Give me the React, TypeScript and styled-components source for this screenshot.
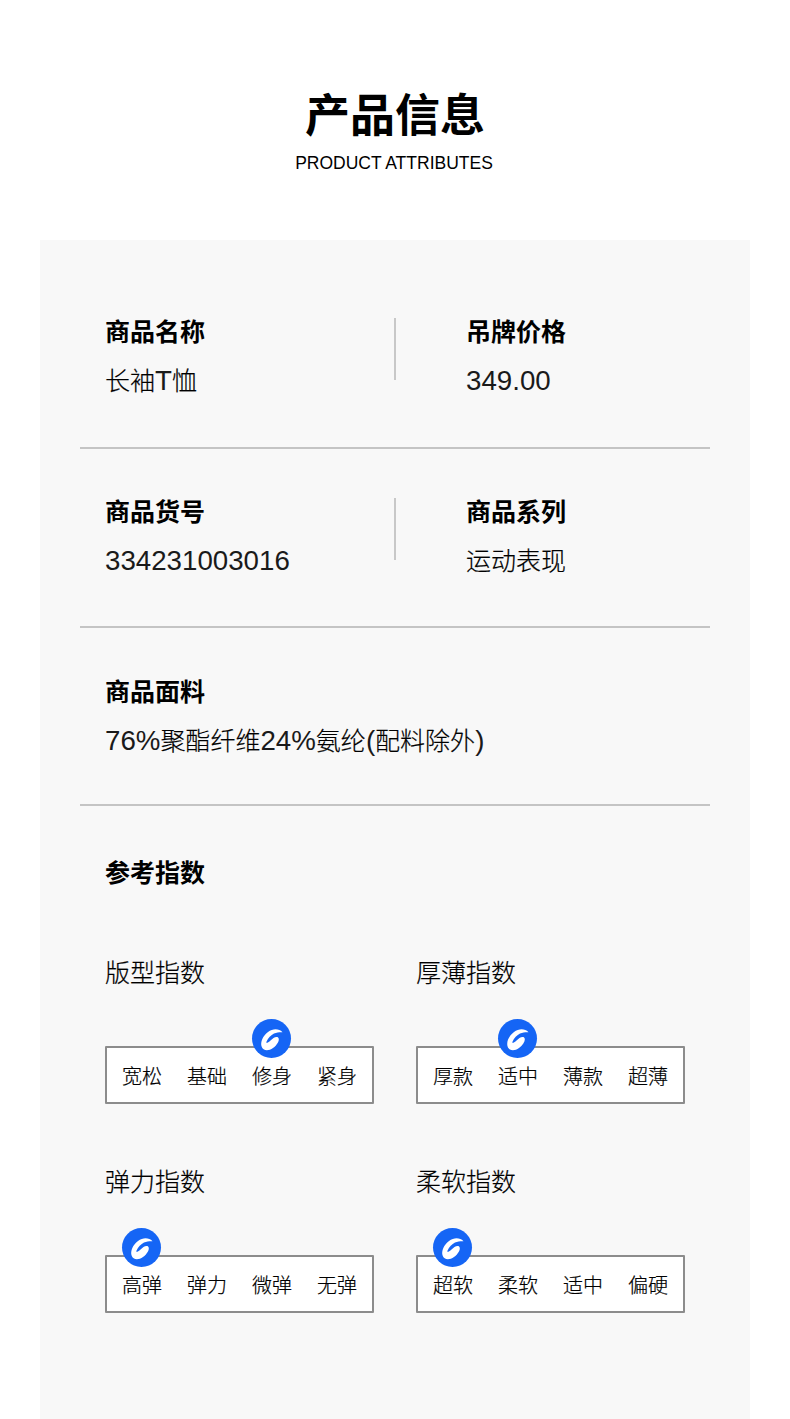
import React from "react";
import styled, { createGlobalStyle } from "styled-components";

const GlobalStyle = createGlobalStyle`
  html, body {
    margin: 0;
    padding: 0;
    background: #fff;
  }
  body {
    font-family: "Liberation Sans", "Noto Sans CJK SC", sans-serif;
    color: #000;
  }
`;

const Page = styled.div`
  width: 790px;
  height: 1419px;
  overflow: hidden;
`;

const Header = styled.header`
  height: 240px;
  padding-top: 90px;
  box-sizing: border-box;
  text-align: center;
`;

const Title = styled.h1`
  margin: 0;
  font-size: 45px;
  line-height: 54px;
  font-weight: 700;
`;

const Subtitle = styled.div`
  margin-top: 9px;
  padding-right: 2px;
  font-size: 17.5px;
  line-height: 20px;
`;

const Panel = styled.section`
  background: #f8f8f8;
  margin: 0 40px;
  padding: 28px 40px 0;
  height: 1179px;
  box-sizing: border-box;
`;

const InfoRow = styled.div<{ $height: number; $top: number }>`
  display: flex;
  height: ${(p) => p.$height}px;
  box-sizing: border-box;
  padding-top: ${(p) => p.$top}px;
  border-bottom: 2px solid #c4c4c4;
`;

const InfoCell = styled.div`
  width: 314px;
  flex: none;
  box-sizing: border-box;
  padding-left: 25px;
`;

const WideCell = styled(InfoCell)`
  width: 100%;
`;

const RightCell = styled(InfoCell)`
  padding-left: 70px;
`;

const Separator = styled.div`
  width: 2px;
  height: 62px;
  background: #c8c8c8;
`;

const Label = styled.div`
  font-size: 25px;
  line-height: 28px;
  font-weight: 700;
`;

const Value = styled.div`
  margin-top: 20px;
  font-size: 25px;
  line-height: 30px;
  font-weight: 300;
  -webkit-text-stroke: 0.2px #000;
`;

/* latin text runs a little larger than the CJK next to it */
const Latin = styled.span`
  font-size: 27.7px;
  line-height: 1;
  color: #1a1a1a;
  -webkit-text-stroke: 0;
`;

const IndexSection = styled.div`
  padding: 53px 0 0 25px;
`;

const IndexGrid = styled.div`
  display: grid;
  grid-template-columns: 269px 269px;
  column-gap: 42px;
  row-gap: 63px;
  margin-top: 71px;
`;

const IndexLabel = styled.div`
  font-size: 25px;
  line-height: 30px;
  font-weight: 300;
  -webkit-text-stroke: 0.2px #000;
`;

const Scale = styled.div`
  margin-top: 58px;
  height: 58px;
  box-sizing: border-box;
  border: 2px solid #8c8c8c;
  border-radius: 1px;
  background: #fff;
  display: flex;
  align-items: center;
  gap: 25px;
  padding: 3px 15px 0;
`;

const ScaleItem = styled.div`
  position: relative;
  width: 40px;
  flex: none;
  font-size: 20px;
  line-height: 24px;
  font-weight: 300;
  -webkit-text-stroke: 0.2px #000;
  text-align: center;
  white-space: nowrap;
`;

const Marker = styled.span`
  position: absolute;
  left: 0;
  top: -46px;
  width: 39px;
  height: 39px;
  border-radius: 50%;
  background: #1565f5;
`;

const Spiral = () => (
  <svg width="39" height="39" viewBox="0 0 39 39" style={{ display: "block" }}>
    <path
      d="M30.5 13.2C27 9.6 21 9.3 16 13C11 16.7 8 23 9.7 27.8C11 31.8 16.5 32.3 21 29C25 26 27.6 22 26.6 19.2C26 17.4 23.4 17.6 21.5 19C19.5 20.5 17.5 22.5 15.8 23.6C14.6 24.3 14 23.6 14.6 22.4C16 19.4 19 16 22 14.6C25 13.3 28 13 30.5 13.2Z"
      fill="#fff"
    />
  </svg>
);

type ScaleData = { name: string; options: string[]; active: number };

const scales: ScaleData[] = [
  { name: "版型指数", options: ["宽松", "基础", "修身", "紧身"], active: 2 },
  { name: "厚薄指数", options: ["厚款", "适中", "薄款", "超薄"], active: 1 },
  { name: "弹力指数", options: ["高弹", "弹力", "微弹", "无弹"], active: 0 },
  { name: "柔软指数", options: ["超软", "柔软", "适中", "偏硬"], active: 0 },
];

export default function App() {
  return (
    <Page>
      <GlobalStyle />
      <Header>
        <Title>产品信息</Title>
        <Subtitle>PRODUCT ATTRIBUTES</Subtitle>
      </Header>
      <Panel>
        <InfoRow $height={181} $top={50}>
          <InfoCell>
            <Label>商品名称</Label>
            <Value>
              长袖<Latin>T</Latin>恤
            </Value>
          </InfoCell>
          <Separator />
          <RightCell>
            <Label>吊牌价格</Label>
            <Value>
              <Latin>349.00</Latin>
            </Value>
          </RightCell>
        </InfoRow>
        <InfoRow $height={179} $top={49}>
          <InfoCell>
            <Label>商品货号</Label>
            <Value>
              <Latin>334231003016</Latin>
            </Value>
          </InfoCell>
          <Separator />
          <RightCell>
            <Label>商品系列</Label>
            <Value>运动表现</Value>
          </RightCell>
        </InfoRow>
        <InfoRow $height={178} $top={50}>
          <WideCell>
            <Label>商品面料</Label>
            <Value>
              <Latin>76%</Latin>聚酯纤维<Latin>24%</Latin>氨纶<Latin>(</Latin>配料除外<Latin>)</Latin>
            </Value>
          </WideCell>
        </InfoRow>
        <IndexSection>
          <Label>参考指数</Label>
          <IndexGrid>
            {scales.map((s) => (
              <div key={s.name}>
                <IndexLabel>{s.name}</IndexLabel>
                <Scale>
                  {s.options.map((o, i) => (
                    <ScaleItem key={o}>
                      {i === s.active && (
                        <Marker>
                          <Spiral />
                        </Marker>
                      )}
                      {o}
                    </ScaleItem>
                  ))}
                </Scale>
              </div>
            ))}
          </IndexGrid>
        </IndexSection>
      </Panel>
    </Page>
  );
}
